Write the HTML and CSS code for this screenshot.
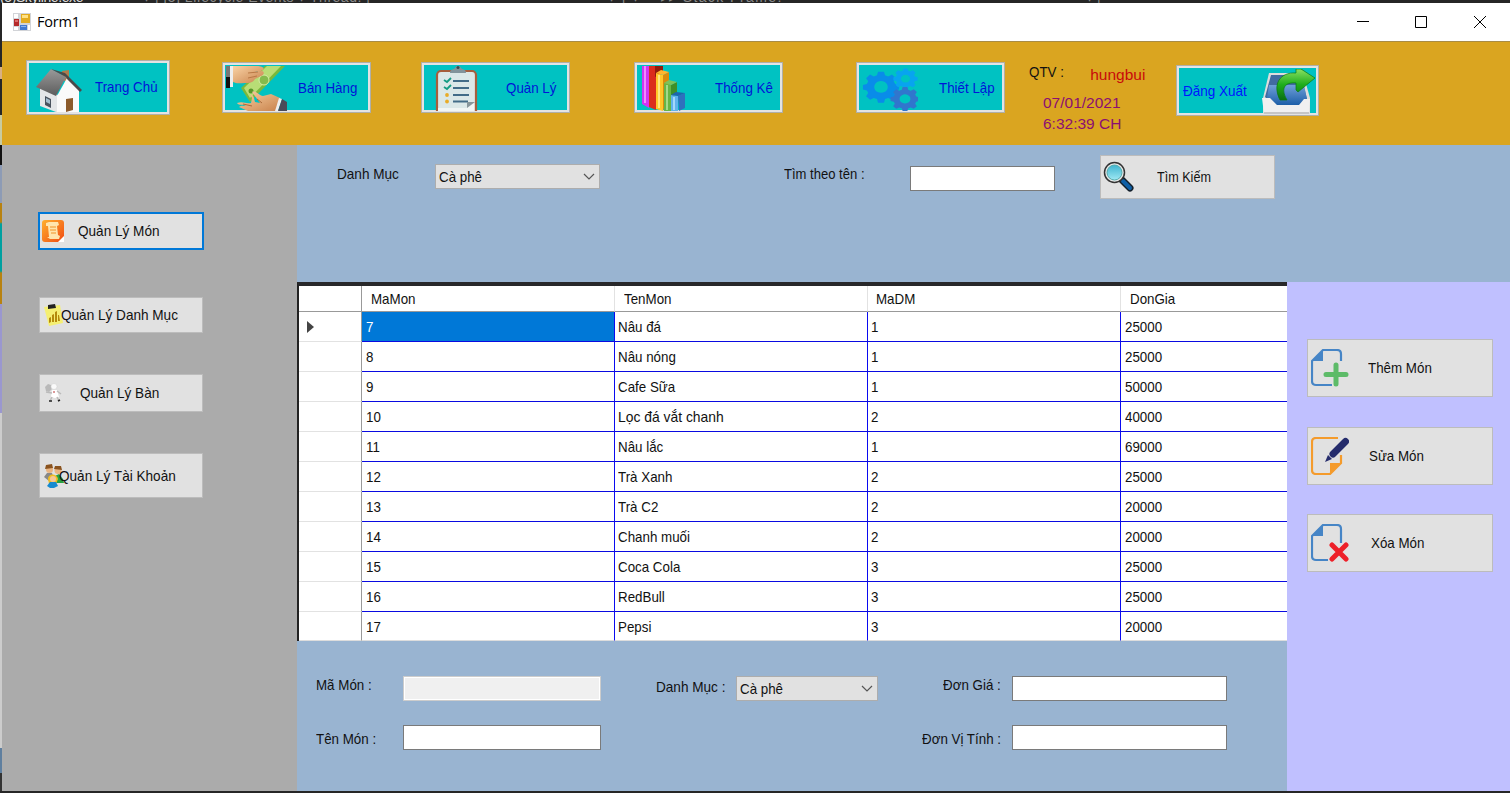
FILE: index.html
```html
<!DOCTYPE html>
<html lang="vi">
<head>
<meta charset="utf-8">
<title>Form1</title>
<link rel="stylesheet" href="styles.css">
</head>
<body>
<svg width="0" height="0" class="defs">
  <defs>
    <linearGradient id="roof" x1="0" y1="0" x2="0" y2="1"><stop offset="0" stop-color="#9a9a9a"/><stop offset="1" stop-color="#5c5c5c"/></linearGradient>
    <linearGradient id="skin" x1="0" y1="0" x2="1" y2="1"><stop offset="0" stop-color="#f9d3a6"/><stop offset="1" stop-color="#c9824b"/></linearGradient>
    <linearGradient id="arrow" x1="0" y1="0" x2="0" y2="1"><stop offset="0" stop-color="#8be063"/><stop offset=".5" stop-color="#1fae1c"/><stop offset="1" stop-color="#0a6f12"/></linearGradient>
    <linearGradient id="tray" x1="0" y1="0" x2="0" y2="1"><stop offset="0" stop-color="#6f9fd8"/><stop offset="1" stop-color="#1d5fa8"/></linearGradient>
    <linearGradient id="orange" x1="0" y1="0" x2="1" y2="1"><stop offset="0" stop-color="#ffb02e"/><stop offset="1" stop-color="#f04a12"/></linearGradient>
    <linearGradient id="lens" x1="0" y1="0" x2="0" y2="1"><stop offset="0" stop-color="#3fb4d0"/><stop offset="1" stop-color="#9fe9f4"/></linearGradient>
    <path id="gear" d="M-2.600-13h5.200l1 3.600 2.800 1.200 3.300-1.900 3.500 3.600-1.900 3.200 1.200 2.700 3.500 1v4.800l-3.500 1-1.200 2.600 1.900 3.300-3.500 3.500-3.300-1.800-2.800 1.100-1 3.700h-5.200l-1-3.700-2.800-1.100-3.300 1.800-3.500-3.500 1.900-3.300-1.200-2.600-3.500-1V.4l3.500-1 1.200-2.700-1.900-3.200 3.500-3.600 3.300 1.900 2.800-1.200zM0-3.500a6 6 0 1 0 .01 0z" fill-rule="evenodd" stroke-linejoin="round"/>
  </defs>
</svg>

<div class="desktop">
  <div class="behind-top">
    <span class="b1">(5)Skyline.exe</span><span class="b2">▾ | [5] Lifecycle Events ▾ Thread: |</span><span class="b3">▾ | ▾ ≡ ▸▸ Stack Frame:</span><span class="b4">▾ |</span>
  </div>
  <div class="behind-left"></div>
  <div class="window">
    <div class="titlebar">
      <svg class="app-icon" width="18" height="18" viewBox="0 0 18 18"><path fill="#d2d4d8" d="M0 0h18v18H0z"/><path fill="#fff" d="M1 1h4v4H1zM1 14h4v3H1zM15 12h2v5h-2z"/><path fill="#b52a2a" d="M1 6h5v7H1z"/><path fill="#dc6b68" d="M2 7h3v2H2z"/><path fill="#e3ab1f" d="M8 1h9v9H8z"/><path fill="#ffe184" d="M9 2h6v3H9z"/><path fill="#4379cf" d="M7 12h7v5H7z"/><path fill="#8bb4f0" d="M8 13h5v1H8z"/></svg>
      <span class="title">Form1</span>
      <svg class="win-buttons" width="130" height="14" viewBox="0 0 130 14" fill="none" stroke="#000"><path d="M0 6.500h12M58.500 1.500h11v11h-11zM117 1l12 12M129 1l-12 12"/></svg>
    </div>

    <div class="header">
      <div class="nav home"><svg width="54" height="48" viewBox="0 0 54 48"><path fill="#b07b4c" d="M32 7l7-1v14l-7-5z"/><path fill="#e4e6e8" d="M10 23l18 8 1 17h-3l-16-6z"/><path fill="#fafafa" d="M27 32l10-18 12 12v22H27z"/><path fill="url(#roof)" d="M6 23L21 5l15 8-10 19z"/><path fill="#4a4a4a" d="M21 5l14 4 17 17-2 2-13-13-1-2z"/><path fill="#49525d" d="M15 32l6 3v9l-6-3z"/><path fill="#a5bdcd" d="M16 34l4 2v4l-4-2z"/><path fill="#8b5a2b" d="M36 35l7-1v12l-7 2z"/></svg><span class="t">Trang Chủ</span></div>
      <div class="nav sell"><svg width="62" height="45" viewBox="0 0 62 45"><path fill="#777" d="M0 0h4v11H0z"/><path fill="#111" d="M0 11h4v11H0z"/><path fill="#eee" d="M4 0h3v21H4z"/><path fill="#79b93c" d="M15 22L39 0h20L24 36z"/><path fill="#b8dd76" d="M18 22L41 0h14L24 32z"/><circle cx="38" cy="14" r="5" fill="#84bb4c" stroke="#d7edaa"/><circle cx="25" cy="25" r="2.500" fill="#58972a"/><path fill="url(#skin)" d="M7 0h24c5 0 8 2 6 4-3 2-6 1-8 2l7-1c3 1 2 4-1 5l-6 3c-2 4-6 4-10 4-5 0-8 1-12-1z"/><path d="M22 7l10-1M22 12l9-2" stroke="#b97845" fill="none"/><path fill="url(#skin)" d="M11 37c6-2 9 1 14 0l1-5-2-4c4 1 4 4 5 8l5 1-8-11c4-2 7 4 11 4l8-2 9 4-4 13H22l-9-4c2-2 5-1 7-1-3-2-7 0-9-3z"/><path d="M17 38l9 2M31 33l5 4" stroke="#a96a3a" fill="none"/><path fill="#eee" d="M53 32l3 1-4 12h-3z"/><path fill="#4b4b59" d="M56 33l5 3v9H52z"/></svg><span class="t">Bán Hàng</span></div>
      <div class="nav manage"><svg width="44" height="45" viewBox="0 0 44 45"><rect x="2" y="5" width="39" height="44" rx="4" fill="#dbe8e8" stroke="#a65e3c" stroke-width="2.200"/><path fill="#82949b" d="M15 7c0-4 3-3 5-5 2-3 4-3 6 0 2 2 5 1 5 5z"/><circle cx="23" cy="1.500" r="1.500" fill="#394950"/><path stroke="#426c88" stroke-width="2" d="M18 15h16M18 22h16M18 29h16M18 35.500h15"/><path stroke="#149c83" stroke-width="1.800" fill="none" d="M9 14l3 2 4-4M9 21l3 2 4-4"/><circle cx="12" cy="29" r="1.900" fill="#e9ac27"/><circle cx="12" cy="35.500" r="1.900" fill="#e9ac27"/><path d="M3 42h29l7-6v9H3z" fill="#f1f6f5"/><path d="M32 42v-6h8z" fill="#87969b"/></svg><span class="t">Quản Lý</span></div>
      <div class="nav stats"><svg width="48" height="45" viewBox="0 0 48 45"><path fill="#d233f5" d="M4 0h7v42l-7-4z"/><path fill="#ef8cff" d="M6 0h2v37H6z"/><path fill="#db2c1c" d="M11 0h7v44l-7-3z"/><path fill="#911a0c" d="M17 0h8v7l-8 4z"/><path fill="#ffc629" d="M18 7l7 2v36l-7-2z"/><path fill="#ffe580" d="M20 9h2v33h-2z"/><path fill="#d98b0d" d="M25 9l6-3v22l-6 17z"/><path fill="#ffb52e" d="M18 7l5-3 8 2-6 3z"/><path fill="#65b546" d="M26 17l7 2v26h-7z"/><path fill="#a4d98a" d="M28 19h2v25h-2z"/><path fill="#3f8f28" d="M33 19l6-3v11l-6 5z"/><path fill="#7cc35c" d="M26 17l5-3 8 2-6 3z"/><path fill="#5fb2ec" d="M33 29l7 1v15h-7z"/><path fill="#a5d8fa" d="M35 31h2v13h-2z"/><path fill="#2f70bd" d="M40 30l7-3v15l-6 3z"/><path fill="#1e65ac" d="M33 29l5-3 9 1-7 3z"/></svg><span class="t">Thống Kê</span></div>
      <div class="nav settings"><svg width="58" height="45" viewBox="0 0 58 45"><use href="#gear" transform="translate(21 18.500) scale(1.130 .98)" fill="#098ce9"/><use href="#gear" transform="translate(45.500 11) scale(.76 .66)" fill="#08a4ef"/><use href="#gear" transform="translate(45 31) scale(.90 .76)" fill="#3176cd"/></svg><span class="t">Thiết Lập</span></div>
      <div class="user">
        <div class="who"><span class="t">QTV :</span><span class="name">hungbui</span></div>
        <div class="date">07/01/2021</div>
        <div class="date">6:32:39 CH</div>
      </div>
      <div class="nav logout"><span class="t">Đăng Xuất</span><svg width="56" height="45" viewBox="0 0 56 45"><path fill="#ddd" d="M9 4h34l7 25v16H3V29z"/><path fill="#416ba1" d="M11 6h30l6 24-6 7H15L5 28z"/><path fill="url(#tray)" d="M9 16h35l3 14-7 6H16l-9-7z"/><path fill="#f0f0f0" d="M2 29h8l7 7h22l5-6h6l-1 15H4z"/><path fill="#c5c5c5" d="M4 43h45v2H4z"/><path fill="url(#arrow)" stroke="#08780e" stroke-width=".7" d="M20 31c-8-16 0-28 16-27V0h5l14 9-17 14-2-2v-7c-11-1-16 5-9 17z"/></svg></div>
    </div>

    <div class="main">
      <div class="sidebar">
        <div class="btn s1"><svg width="24" height="24" viewBox="0 0 24 24"><rect x="1" y="1" width="22" height="22" rx="3" fill="url(#orange)"/><path fill="#ffe5ae" d="M5 4l3-1h9l1 3-2 1 1 9 2 1-1 3H9l-3-2h2L7 7H5z"/><path stroke="#f19326" d="M9 8h6M9 11h6M10 14h5"/><path fill="#fff" d="M17 23l6-6v6z"/></svg><span class="t">Quản Lý Món</span></div>
        <div class="btn s2"><svg width="22" height="22" viewBox="0 0 22 22"><path fill="#f5ef72" d="M0 3l16-2 3 18-14 3z"/><path fill="#222" d="M4 1l7-1 1 4-8 1z"/><path fill="#b58a0b" d="M5 14l2-1v5l-2 1zM8 11l2-1v8H8zM11 8l2-1v11h-2zM14 11h1l1 6h-2z"/></svg><span class="t">Quản Lý Danh Mục</span></div>
        <div class="btn s3"><svg width="19" height="20" viewBox="0 0 19 20"><path fill="#b9b9b9" d="M1 4l3-3 3 1 1 4-3 3-3-1z"/><circle cx="10" cy="3.500" r="3" fill="#fafafa" stroke="#ccc" stroke-width=".5"/><path d="M8 7h5l2 7-4 1-4-1z" fill="#fff"/><path d="M2 9l6 1M13 8l4 3M8 14l-2 4M13 14l2 4" stroke="#bbb" stroke-width="1.500" fill="none"/><path stroke="#222" stroke-width="1.600" d="M5 18h3M14 18l2-1"/><path stroke="#b33" d="M10 8v2"/></svg><span class="t">Quản Lý Bàn</span></div>
        <div class="btn s4"><svg width="20" height="24" viewBox="0 0 20 24"><path fill="#888" d="M0 13l3-4h5l2 6-5 2z"/><path fill="#27a142" d="M11 12l4-2 4 5 1 4h-8z"/><circle cx="5.500" cy="5.500" r="3.500" fill="#eab583"/><path fill="#8a531f" d="M1 5l1-4 6-1 1 4z"/><circle cx="14" cy="6.500" r="3.500" fill="#eab583"/><path fill="#8a531f" d="M10 5l1-3 6 0 1 4z"/><path fill="#f1bd20" d="M4 15c0-6 9-6 10 0l-2 5H5z"/><circle cx="9" cy="15" r="3" fill="#f5c797"/><path fill="#168ad0" d="M3 22l3-4h6l2 4-4 2H6z"/></svg><span class="t">Quản Lý Tài Khoản</span></div>
      </div>
      <div class="content">
        <div class="filter">
          <span class="t lbl">Danh Mục</span>
          <div class="combo"><span class="t">Cà phê</span><svg width="12" height="8" viewBox="0 0 12 8"><path d="M1 1l5 5 5-5" fill="none" stroke="#555" stroke-width="1.200"/></svg></div>
          <span class="t lbl find">Tìm theo tên :</span>
          <div class="input q"></div>
          <div class="btn search"><svg width="32" height="32" viewBox="0 0 32 32"><path d="M19 19l8 8" stroke="#14202c" stroke-width="7" stroke-linecap="round"/><path d="M20 20l7 7" stroke="#0e5fa6" stroke-width="4" stroke-linecap="round"/><circle cx="11.500" cy="11.500" r="10" fill="#e8e8e8" stroke="#333" stroke-width="1.500"/><circle cx="11.500" cy="11.500" r="7.500" fill="url(#lens)" stroke="#5aa"/></svg><span class="t">Tìm Kiếm</span></div>
        </div>
        <div class="work">
          <div class="center">
            <div class="grid">
              <div class="row head"><div></div><div><span class="t">MaMon</span></div><div><span class="t">TenMon</span></div><div><span class="t">MaDM</span></div><div><span class="t">DonGia</span></div></div>
              <div class="row"><div><svg width="7" height="12" viewBox="0 0 7 12"><path d="M0 0l7 6-7 6z" fill="#444"/></svg></div><div class="sel"><span class="t">7</span></div><div><span class="t">Nâu đá</span></div><div><span class="t">1</span></div><div><span class="t">25000</span></div></div>
              <div class="row"><div></div><div><span class="t">8</span></div><div><span class="t">Nâu nóng</span></div><div><span class="t">1</span></div><div><span class="t">25000</span></div></div>
              <div class="row"><div></div><div><span class="t">9</span></div><div><span class="t">Cafe Sữa</span></div><div><span class="t">1</span></div><div><span class="t">50000</span></div></div>
              <div class="row"><div></div><div><span class="t">10</span></div><div><span class="t wide">Lọc đá vắt chanh</span></div><div><span class="t">2</span></div><div><span class="t">40000</span></div></div>
              <div class="row"><div></div><div><span class="t">11</span></div><div><span class="t">Nâu lắc</span></div><div><span class="t">1</span></div><div><span class="t">69000</span></div></div>
              <div class="row"><div></div><div><span class="t">12</span></div><div><span class="t">Trà Xanh</span></div><div><span class="t">2</span></div><div><span class="t">25000</span></div></div>
              <div class="row"><div></div><div><span class="t">13</span></div><div><span class="t">Trà C2</span></div><div><span class="t">2</span></div><div><span class="t">20000</span></div></div>
              <div class="row"><div></div><div><span class="t">14</span></div><div><span class="t">Chanh muối</span></div><div><span class="t">2</span></div><div><span class="t">20000</span></div></div>
              <div class="row"><div></div><div><span class="t">15</span></div><div><span class="t">Coca Cola</span></div><div><span class="t">3</span></div><div><span class="t">25000</span></div></div>
              <div class="row"><div></div><div><span class="t">16</span></div><div><span class="t">RedBull</span></div><div><span class="t">3</span></div><div><span class="t">25000</span></div></div>
              <div class="row"><div></div><div><span class="t">17</span></div><div><span class="t">Pepsi</span></div><div><span class="t">3</span></div><div><span class="t">20000</span></div></div>
            </div>
            <div class="form">
              <span class="t">Mã Món :</span><div class="input disabled"></div>
              <span class="t dm">Danh Mục :</span><div class="combo"><span class="t">Cà phê</span><svg width="12" height="8" viewBox="0 0 12 8"><path d="M1 1l5 5 5-5" fill="none" stroke="#555" stroke-width="1.200"/></svg></div>
              <span class="t price">Đơn Giá :</span><div class="input"></div>
              <span class="t name2">Tên Món :</span><div class="input"></div>
              <span></span><span></span>
              <span class="t unit">Đơn Vị Tính :</span><div class="input"></div>
            </div>
          </div>
          <div class="actions">
            <div class="btn a1"><svg width="38" height="38" viewBox="0 0 38 38"><path d="M30 12V5q0-4-4-4H12L1 12v20q0 4 4 4h16" fill="none" stroke="#4685c6" stroke-width="2.200"/><path d="M1 12L12 1v11z" fill="#4685c6"/><path d="M25 16v19M15 25.500h20" stroke="#5dbb68" stroke-width="5" stroke-linecap="round"/></svg><span class="t">Thêm Món</span></div>
            <div class="btn a2"><svg width="38" height="38" viewBox="0 0 38 38"><path d="M27 1H5Q1 1 1 5v28q0 4 4 4h14l11-11v-8" fill="none" stroke="#f49b2c" stroke-width="2.200"/><path d="M19 37V26h11z" fill="#f49b2c"/><path d="M22 17L34.500 4.500" stroke="#252c6c" stroke-width="7" stroke-linecap="round"/><path d="M17 18l4 4-7 3z" fill="#252c6c"/></svg><span class="t">Sửa Món</span></div>
            <div class="btn a3"><svg width="38" height="38" viewBox="0 0 38 38"><path d="M30 19V5q0-4-4-4H12L1 12v20q0 4 4 4h12" fill="none" stroke="#4685c6" stroke-width="2.200"/><path d="M1 12L12 1v11z" fill="#4685c6"/><path d="M21 21l14 14M35 21L21 35" stroke="#ed2029" stroke-width="5" stroke-linecap="round"/></svg><span class="t">Xóa Món</span></div>
          </div>
        </div>
      </div>
    </div>
  </div>
</div>
</body>
</html>
```
FILE: styles.css
```css
* { box-sizing: border-box; }
body { margin: 0; font: 15px/18px "Liberation Sans", Arial, sans-serif; color: #111; }
svg { display: block; flex: none; }
.defs { position: absolute; }
.desktop { width: 1510px; height: 793px; background: #262626; overflow: hidden; display: grid; grid-template: 3px 788px / 2px 1508px; }
.behind-top { grid-column: 1 / 3; position: relative; overflow: hidden; color: #8a8a8a; font-size: 14px; }
.behind-top span { position: absolute; top: -12px; white-space: pre; }
.behind-top .b1 { left: 0; color: #ddd; letter-spacing: -.4px; }
.behind-top .b2 { left: 143px; letter-spacing: .5px; }
.behind-top .b3 { left: 608px; letter-spacing: 1.4px; }
.behind-top .b4 { left: 1086px; }
.behind-left { background: linear-gradient(#262626 64px, #d9b083 64px 76px, #262626 76px 112px, #c8cba0 112px 142px, #111 142px 162px, #8d9bb5 162px 200px, #b88210 200px 219px, #00a0a0 221px 268px, #b88210 270px 301px, #9a97cf 301px 410px, #ccc 410px 745px, #5f7f9f 745px 770px, #333 770px); }
.window { display: flex; flex-direction: column; }

/* Text is drawn slightly condensed */
.t { display: inline-block; white-space: nowrap; transform: scaleX(.89); transform-origin: 0 50%; flex: none; }

.titlebar { height: 38px; background: #fff; display: flex; align-items: center; padding-left: 11px; }
.title { font: 14.500px/20px "Open Sans", sans-serif; color: #000; margin-left: 6px; letter-spacing: -.2px; }
.win-buttons { margin-left: auto; margin-right: 23px; }

.header { height: 104px; background: #daa520; display: flex; align-items: flex-start; border-top: 1px solid #a98c44; }
.nav { display: flex; align-items: flex-start; height: 51px; width: 149px; border: 1px solid #b0afa8; background: #00c2c2; box-shadow: inset 0 0 0 2px #e3e3e3; padding: 3px; margin-top: 20px; color: #0014d8; overflow: hidden; flex: none; }
.nav .t { margin-top: 13px; }
.home { width: 144px; height: 55px; margin-left: 24px; margin-top: 18px; }
.home .t { margin-left: 11px; margin-top: 14px; }
.sell { margin-left: 52px; }
.sell .t { margin-left: 10px; }
.manage { margin-left: 50px; }
.manage svg { margin-left: 10px; }
.manage .t { margin-left: 27px; }
.stats { margin-left: 64px; }
.stats .t { margin-left: 29px; }
.settings { margin-left: 73px; }
.settings .t { margin-left: 21px; }
.user { width: 171px; padding: 21px 0 0 24px; }
.who { display: flex; height: 31px; }
.who .name { margin: 3px 0 0 22px; color: #c80a0a; font-size: 15.500px; }
.date { height: 21px; margin-left: 14px; color: #8b0f72; font-size: 15.500px; }
.logout { width: 143px; margin-top: 23px; color: #0014ff; }
.logout .t { margin-left: 3px; width: 77px; transform: scaleX(.9); }

.main { flex: 1; display: flex; }
.btn { display: flex; align-items: center; background: #e1e1e1; border: 1px solid #bcbcbc; flex: none; }
.sidebar { width: 295px; background: #ababab; padding: 67px 0 0 36px; }
.sidebar .btn { width: 164px; margin-left: 1px; padding-left: 4px; }
.sidebar .t { transform: scaleX(.905); }
.sidebar .s1 { width: 166px; height: 38px; margin-left: 0; border: 2px solid #0078d7; padding-left: 1px; }
.s1 .t { margin-left: 13px; }
.s2 { height: 36px; margin-top: 47px; }
.sidebar .s2 .t { margin-left: -5px; }
.s3 { height: 38px; margin-top: 41px; }
.s3 .t { margin-left: 17px; }
.s4 { height: 45px; margin-top: 41px; }
.sidebar .s4 .t { margin-left: -5px; }
.content { flex: 1; display: flex; flex-direction: column; }
.filter { height: 137px; background: #99b4d1; display: flex; align-items: flex-start; padding-left: 40px; }
.filter .lbl { width: 98px; margin-top: 20px; transform: scaleX(.905); }
.combo { display: flex; align-items: center; justify-content: space-between; width: 165px; height: 25px; border: 1px solid #adadad; background: #e1e1e1; padding: 0 4px 0 3px; }
.filter .combo { margin-top: 19px; }
.filter .find { width: 126px; margin-left: 184px; transform: scaleX(.87); }
.input { height: 25px; border: 1px solid #7a7a7a; background: #fff; }
.q { width: 145px; margin-top: 21px; }
.search { width: 175px; height: 44px; margin: 10px 0 0 45px; padding-left: 2px; }
.search .t { margin-left: 22px; transform: scaleX(.84); }
.work { flex: 1; display: flex; }
.center { width: 990px; display: flex; flex-direction: column; }
.grid { height: 359px; border-top: 4px solid #28282a; border-left: 2px solid #222; background: #fff; overflow: hidden; }
.row { display: grid; grid-template-columns: 63px 253px 253px 253px 166px; height: 30px; }
.row > div { border-right: 1px solid #0a0af0; border-bottom: 1px solid #0a0ae0; padding-left: 4px; display: flex; align-items: center; }
.row > div:nth-child(3), .row > div:nth-child(4) { padding-left: 3px; }
.row .wide { transform: scaleX(.925); }
.row > div:first-child { border-right-color: #999; border-bottom-color: #e2e2e2; padding-left: 8px; }
.row > div:last-child { border-right: 0; }
.row:last-child > div { border-bottom-color: #ddd; height: 29px; padding-top: 1px; }
.head { height: 26px; }
.head > div, .head > div:first-child { border-color: #999; border-right-color: #e2e2e2; padding-left: 9px; }
.head > div:nth-child(3) { padding-left: 9px; }
.head > div:nth-child(4) { padding-left: 8px; }
.row.head > div { border-bottom-color: #999; border-right-color: #e2e2e2; }
.row.head > div:nth-child(3) { padding-left: 9px; }
.row.head > div:nth-child(4) { padding-left: 8px; }
.row.head > div:nth-child(2), .row.head > div:last-child { padding-left: 9px; }
.row.head > div:first-child { border-right-color: #999; }
.row .sel { background: #0078d7; color: #fff; }
.form { flex: 1; background: #99b4d1; display: grid; grid-template-columns: 87px 198px 135px 142px 134px 215px; grid-auto-rows: 49px; align-items: start; padding: 35px 0 0 19px; }
.form .combo { width: 142px; }
.form .disabled { background: #f0f0f0; border-color: #ccc; box-shadow: inset 0 0 0 1px #fff; }
.form .dm { margin: 2px 0 0 55px; transform: scaleX(.905); }
.form .price { margin-left: 65px; }
.form .name2 { margin-top: 5px; }
.form .unit { margin: 5px 0 0 44px; }
.actions { flex: 1; background: #c0c0ff; padding: 57px 0 0 20px; }
.actions .btn { width: 186px; height: 58px; margin-bottom: 30px; padding-left: 3px; }
.actions .btn:nth-child(2) { margin-bottom: 29px; }
.a1 .t { margin-left: 19px; }
.a2 .t { margin-left: 20px; }
.a3 .t { margin-left: 22px; }
```
